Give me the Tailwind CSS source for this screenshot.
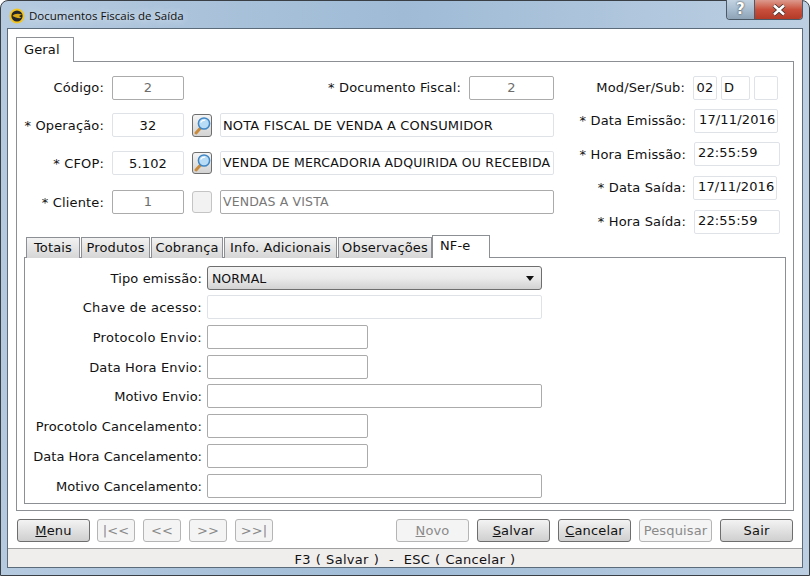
<!DOCTYPE html>
<html lang="pt">
<head>
  <meta charset="UTF-8" />
  <title>Documentos Fiscais de Saída</title>
  <script src="https://cdn.jsdelivr.net/npm/@tailwindcss/browser@4"></script>
</head>
<body class="w-[810px] h-[576px] overflow-hidden bg-white">

  <!-- JANELA -->
  <div class="relative w-[810px] h-[576px] flex flex-col rounded-t-lg border border-[#3a3f46] bg-gradient-to-r from-[#b5cadf] via-[#9fbbd6] to-[#bccfe2] font-['DejaVu_Sans',sans-serif] text-[13px] tracking-[0.15px] text-[#111]">

    <!-- TITULO -->
    <div class="h-[27px] shrink-0 flex items-center pl-[8px] pt-[2px]">
      <svg width="16" height="16" viewBox="0 0 16 16" class="mr-[4px]">
        <circle cx="8" cy="8" r="7.5" fill="#f2c522"/>
        <circle cx="8" cy="8" r="5.6" fill="#23262b"/>
        <path d="M3.5 8 C5 5.5 9 5 13 6.5 L10 8 L12.5 10 C9 10.5 6 9.5 3.5 8Z" fill="#d9a916"/>
      </svg>
      <span class="font-['Open_Sans',sans-serif] text-[11.5px] tracking-normal text-[#111] [text-shadow:0_0_8px_#fff]">Documentos Fiscais de Saída</span>
    </div>

    <!-- BOTOES DA JANELA -->
    <div class="absolute top-[-1px] right-[6px] flex h-[20px] rounded-b-[4px] border border-t-0 border-[#4c5a68] overflow-hidden">
      <div class="w-[28px] flex items-center justify-center bg-gradient-to-b from-[#c3d3e2] via-[#a8bdd0] to-[#8ea3b5] border-r border-[#4c5a68] text-white font-bold text-[15px] [text-shadow:0_0_2px_#222]">?</div>
      <div class="w-[47px] flex items-center justify-center bg-gradient-to-b from-[#dc9a8e] via-[#c8503c] to-[#b43a28]">
        <svg width="16" height="12" viewBox="0 0 16 12"><path d="M3 1.5 L13 10.5 M13 1.5 L3 10.5" stroke="#37302f" stroke-width="4.2"/><path d="M3 1.5 L13 10.5 M13 1.5 L3 10.5" stroke="#fff" stroke-width="2.6"/></svg>
      </div>
    </div>

    <!-- AREA CLIENTE -->
    <div class="mx-[6px] flex-1 flex flex-col border border-[#5b6b7a] bg-white">

      <div class="px-[8px] pt-[8px]">
        <!-- ABA GERAL -->
        <div class="relative z-10 w-[58px] h-[25px] mb-[-1px] pl-[7px] pt-[2px] border border-b-0 border-[#8c8f94] bg-white">Geral</div>

        <div class="h-[450px] border border-[#8c8f94] flex flex-col px-[7px]">

          <!-- CABECALHO -->
          <div class="h-[174px] shrink-0 flex">
            <div class="w-[530px] shrink-0 flex flex-col pt-[14px]">
              <div class="h-[24px] flex items-center">
                <span class="w-[80px] text-right">Código:</span>
                <div class="ml-[8px] w-[72px] h-[24px] border border-[#ababab] rounded-[2px] flex items-center justify-center text-[#6d6d6d]">2</div>
                <span class="w-[277px] text-right">* Documento Fiscal:</span>
                <div class="ml-[8px] w-[85px] h-[24px] border border-[#ababab] rounded-[2px] flex items-center justify-center text-[#6d6d6d]">2</div>
              </div>
              <div class="h-[24px] mt-[13px] flex items-center">
                <span class="w-[80px] text-right pt-[2px] whitespace-nowrap">* Operação:</span>
                <div class="ml-[8px] w-[72px] h-[24px] border border-[#dfe3e8] rounded-[2px] flex items-center justify-center pt-[2px]">32</div>
                <div class="ml-[8px] mt-[1px] w-[20px] h-[23px] border border-[#6e6e6e] rounded-[3px] bg-gradient-to-b from-[#f4f4f4] to-[#d3d3d3] flex items-center justify-center">
                  <svg width="18" height="20" viewBox="0 0 18 20"><path d="M8 11.5 L3 17" stroke="#c98a3c" stroke-width="3" stroke-linecap="round"/><circle cx="11" cy="7.5" r="5.6" fill="#b9dcf6" stroke="#3f86c4" stroke-width="1.5"/><path d="M7.6 6.5 Q9.2 3.8 12.2 4.2" stroke="#fff" stroke-width="1.3" fill="none"/></svg>
                </div>
                <div class="ml-[8px] w-[334px] h-[24px] border border-[#dfe3e8] rounded-[2px] flex items-center pl-[2px] pt-[2px] whitespace-nowrap overflow-hidden">NOTA FISCAL DE VENDA A CONSUMIDOR</div>
              </div>
              <div class="h-[25px] mt-[13px] flex items-center">
                <span class="w-[80px] text-right pt-[2px]">* CFOP:</span>
                <div class="ml-[8px] w-[72px] h-[24px] border border-[#dfe3e8] rounded-[2px] flex items-center justify-center pt-[2px]">5.102</div>
                <div class="ml-[8px] mt-[1px] w-[20px] h-[22px] border border-[#6e6e6e] rounded-[3px] bg-gradient-to-b from-[#f4f4f4] to-[#d3d3d3] flex items-center justify-center">
                  <svg width="18" height="20" viewBox="0 0 18 20"><path d="M8 11.5 L3 17" stroke="#c98a3c" stroke-width="3" stroke-linecap="round"/><circle cx="11" cy="7.5" r="5.6" fill="#b9dcf6" stroke="#3f86c4" stroke-width="1.5"/><path d="M7.6 6.5 Q9.2 3.8 12.2 4.2" stroke="#fff" stroke-width="1.3" fill="none"/></svg>
                </div>
                <div class="ml-[8px] w-[334px] h-[24px] border border-[#dfe3e8] rounded-[2px] flex items-center pl-[2px] pt-[2px] text-[12.5px] tracking-[0.2px] whitespace-nowrap overflow-hidden">VENDA DE MERCADORIA ADQUIRIDA OU RECEBIDA</div>
              </div>
              <div class="h-[24px] mt-[15px] flex items-center">
                <span class="w-[80px] text-right pt-[2px]">* Cliente:</span>
                <div class="ml-[8px] w-[72px] h-[24px] border border-[#ababab] rounded-[2px] flex items-center justify-center text-[#6d6d6d]">1</div>
                <div class="ml-[8px] w-[20px] h-[22px] border border-[#c4c4c4] rounded-[3px] bg-[#f2f2f2]"></div>
                <div class="ml-[8px] w-[334px] h-[24px] border border-[#ababab] rounded-[2px] flex items-center pl-[2px] text-[12.5px] text-[#777]">VENDAS A VISTA</div>
              </div>
            </div>

            <div class="flex-1 flex flex-col pt-[14px]">
              <div class="h-[24px] flex items-center">
                <span class="w-[131px] text-right whitespace-nowrap">Mod/Ser/Sub:</span>
                <div class="ml-[8px] w-[24px] h-[24px] border border-[#dfe3e8] rounded-[2px] flex items-center justify-center">02</div>
                <div class="ml-[4px] w-[29px] h-[24px] border border-[#dfe3e8] rounded-[2px] flex items-center pl-[2px]">D</div>
                <div class="ml-[4px] w-[24px] h-[24px] border border-[#dfe3e8] rounded-[2px]"></div>
              </div>
              <div class="h-[24px] mt-[9px] flex items-center">
                <span class="w-[132px] text-right whitespace-nowrap">* Data Emissão:</span>
                <div class="ml-[8px] w-[84px] h-[24px] pb-[2px] border border-[#dfe3e8] rounded-[2px] flex items-center pl-[4px] whitespace-nowrap">17/11/2016</div>
              </div>
              <div class="h-[24px] mt-[9px] flex items-center">
                <span class="w-[132px] text-right pt-[2px] whitespace-nowrap">* Hora Emissão:</span>
                <div class="ml-[8px] w-[86px] h-[24px] pb-[2px] border border-[#dfe3e8] rounded-[2px] flex items-center pl-[3px]">22:55:59</div>
              </div>
              <div class="h-[24px] mt-[10px] flex items-center">
                <span class="w-[132px] text-right whitespace-nowrap">* Data Saída:</span>
                <div class="ml-[7px] w-[84px] h-[24px] pb-[2px] border border-[#dfe3e8] rounded-[2px] flex items-center pl-[4px] whitespace-nowrap">17/11/2016</div>
              </div>
              <div class="h-[24px] mt-[10px] flex items-center">
                <span class="w-[132px] text-right whitespace-nowrap">* Hora Saída:</span>
                <div class="ml-[8px] w-[86px] h-[24px] pb-[2px] border border-[#dfe3e8] rounded-[2px] flex items-center pl-[3px]">22:55:59</div>
              </div>
            </div>
          </div>

          <!-- ABAS INTERNAS -->
          <div class="relative z-10 h-[22px] mb-[-1px] flex items-end pl-[2px] gap-[1px]">
            <div class="h-[21px] w-[54px] flex items-center justify-center border border-b-0 border-[#8c8f94] bg-gradient-to-b from-[#f2f2f2] to-[#d6d6d6]">Totais</div>
            <div class="h-[21px] w-[69px] flex items-center justify-center border border-b-0 border-[#8c8f94] bg-gradient-to-b from-[#f2f2f2] to-[#d6d6d6]">Produtos</div>
            <div class="h-[21px] w-[72px] flex items-center justify-center border border-b-0 border-[#8c8f94] bg-gradient-to-b from-[#f2f2f2] to-[#d6d6d6]">Cobrança</div>
            <div class="h-[21px] w-[113px] flex items-center justify-center border border-b-0 border-[#8c8f94] bg-gradient-to-b from-[#f2f2f2] to-[#d6d6d6] whitespace-nowrap">Info. Adicionais</div>
            <div class="h-[21px] w-[94px] flex items-center justify-center border border-b-0 border-[#8c8f94] bg-gradient-to-b from-[#f2f2f2] to-[#d6d6d6]">Observações</div>
            <div class="h-[23px] w-[58px] ml-[-1px] pl-[7px] border border-b-0 border-[#8c8f94] bg-white">NF-e</div>
          </div>

          <!-- PAINEL NF-E -->
          <div class="h-[247px] border border-[#8c8f94] flex flex-col pt-[8px]">
            <div class="h-[24px] flex items-center">
              <span class="w-[177px] text-right pt-[2px]">Tipo emissão:</span>
              <div class="ml-[5px] w-[335px] h-[24px] border border-[#6e6e6e] rounded-[3px] bg-gradient-to-b from-[#f3f3f3] via-[#ebebeb] to-[#d2d2d2] flex items-center justify-between pl-[4px] pr-[7px]">
                <span class="text-[12.5px] tracking-normal pt-[2px]">NORMAL</span>
                <svg width="8" height="5" viewBox="0 0 8 5"><path d="M0 0H8L4 5Z" fill="#111"/></svg>
              </div>
            </div>
            <div class="h-[24px] mt-[5px] flex items-center">
              <span class="w-[177px] text-right pt-[2px] tracking-[0.3px]">Chave de acesso:</span>
              <div class="ml-[5px] w-[335px] h-[24px] border border-[#dfe3e8] rounded-[2px]"></div>
            </div>
            <div class="h-[24px] mt-[6px] flex items-center">
              <span class="w-[177px] text-right pt-[2px] tracking-[0.3px]">Protocolo Envio:</span>
              <div class="ml-[5px] w-[161px] h-[24px] border border-[#ababab] rounded-[2px]"></div>
            </div>
            <div class="h-[24px] mt-[6px] flex items-center">
              <span class="w-[177px] text-right pt-[2px]">Data Hora Envio:</span>
              <div class="ml-[5px] w-[161px] h-[24px] border border-[#ababab] rounded-[2px]"></div>
            </div>
            <div class="h-[24px] mt-[5px] flex items-center">
              <span class="w-[177px] text-right pt-[2px] tracking-normal">Motivo Envio:</span>
              <div class="ml-[5px] w-[335px] h-[24px] border border-[#ababab] rounded-[2px]"></div>
            </div>
            <div class="h-[24px] mt-[6px] flex items-center">
              <span class="w-[177px] text-right pt-[2px] whitespace-nowrap">Procotolo Cancelamento:</span>
              <div class="ml-[5px] w-[161px] h-[24px] border border-[#ababab] rounded-[2px]"></div>
            </div>
            <div class="h-[24px] mt-[6px] flex items-center">
              <span class="w-[177px] text-right pt-[2px] whitespace-nowrap tracking-normal">Data Hora Cancelamento:</span>
              <div class="ml-[5px] w-[161px] h-[24px] border border-[#ababab] rounded-[2px]"></div>
            </div>
            <div class="h-[24px] mt-[6px] flex items-center">
              <span class="w-[177px] text-right pt-[2px] whitespace-nowrap tracking-normal">Motivo Cancelamento:</span>
              <div class="ml-[5px] w-[335px] h-[24px] border border-[#ababab] rounded-[2px]"></div>
            </div>
          </div>
        </div>
      </div>

      <!-- BOTOES -->
      <div class="h-[22px] mt-[8px] mx-[9px] flex items-center">
        <div class="w-[73px] h-[23px] pt-[2px] border border-[#6e6e6e] rounded-[3px] bg-gradient-to-b from-[#f3f3f3] to-[#cfcfcf] flex items-center justify-center"><span><u>M</u>enu</span></div>
        <div class="ml-[7px] w-[38px] h-[23px] pt-[2px] border border-[#b5b5b5] rounded-[3px] bg-[#f4f4f4] flex items-center justify-center text-[#8a8a8a]">|&lt;&lt;</div>
        <div class="ml-[8px] w-[38px] h-[23px] pt-[2px] border border-[#b5b5b5] rounded-[3px] bg-[#f4f4f4] flex items-center justify-center text-[#8a8a8a]">&lt;&lt;</div>
        <div class="ml-[8px] w-[38px] h-[23px] pt-[2px] border border-[#b5b5b5] rounded-[3px] bg-[#f4f4f4] flex items-center justify-center text-[#8a8a8a]">&gt;&gt;</div>
        <div class="ml-[8px] w-[38px] h-[23px] pt-[2px] border border-[#b5b5b5] rounded-[3px] bg-[#f4f4f4] flex items-center justify-center text-[#8a8a8a]">&gt;&gt;|</div>
        <div class="ml-[123px] w-[73px] h-[23px] pt-[2px] border border-[#b5b5b5] rounded-[3px] bg-[#f4f4f4] flex items-center justify-center text-[#8a8a8a]"><span><u>N</u>ovo</span></div>
        <div class="ml-[8px] w-[73px] h-[23px] pt-[2px] border border-[#6e6e6e] rounded-[3px] bg-gradient-to-b from-[#f3f3f3] to-[#cfcfcf] flex items-center justify-center"><span><u>S</u>alvar</span></div>
        <div class="ml-[8px] w-[73px] h-[23px] pt-[2px] border border-[#6e6e6e] rounded-[3px] bg-gradient-to-b from-[#f3f3f3] to-[#cfcfcf] flex items-center justify-center"><span><u>C</u>ancelar</span></div>
        <div class="ml-[8px] w-[73px] h-[23px] pt-[2px] border border-[#b5b5b5] rounded-[3px] bg-[#f4f4f4] flex items-center justify-center text-[#8a8a8a]">Pesquisar</div>
        <div class="ml-[8px] w-[73px] h-[23px] pt-[2px] border border-[#6e6e6e] rounded-[3px] bg-gradient-to-b from-[#f3f3f3] to-[#cfcfcf] flex items-center justify-center">Sair</div>
      </div>

      <!-- STATUS -->
      <div class="mt-auto h-[19px] pt-[4px] border-t border-[#a0a0a0] bg-[#f0eded] flex items-center justify-center whitespace-pre tracking-[0.3px] [word-spacing:0.5px]">F3 ( Salvar )  -  ESC ( Cancelar )</div>
    </div>

    <div class="h-[7px] shrink-0"></div>
  </div>
</body>
</html>
